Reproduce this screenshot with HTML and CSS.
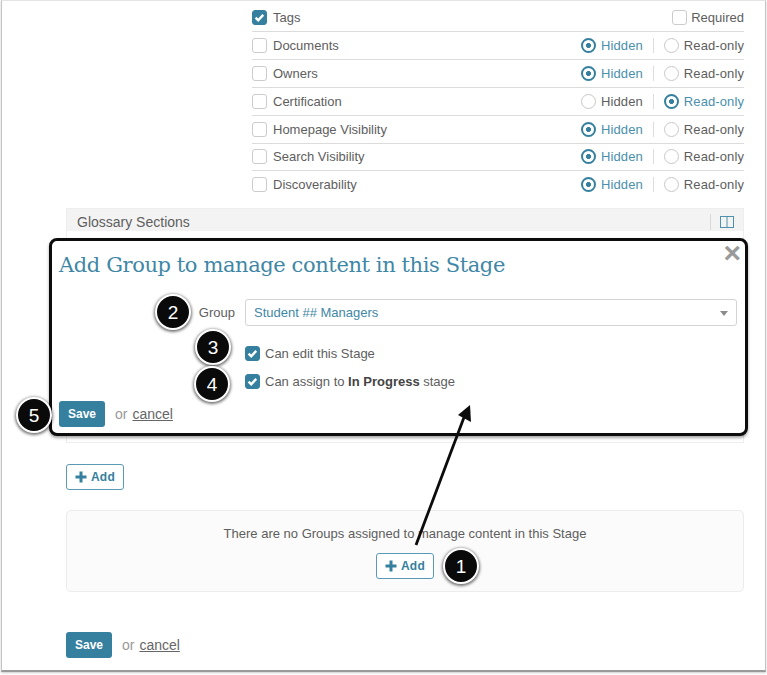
FILE: index.html
```html
<!DOCTYPE html>
<html lang="en">
<head>
<meta charset="utf-8">
<title>Add Group to manage content in this Stage</title>
<link rel="stylesheet" href="styles.css">
</head>
<body>
<div class="window">
  <div class="fields">
    <div class="row">
      <span class="check on"><svg viewBox="0 0 16 16"><path d="M3.2 8.2l3.2 3.2 6.2-6.6" /></svg></span><span class="name">Tags</span>
      <span class="req"><span class="check"></span>Required</span>
    </div>
    <div class="row"><span class="check"></span><span class="name">Documents</span>
      <span class="opts"><span class="opt sel"><i class="radio"></i>Hidden</span><span class="opt"><i class="radio"></i>Read-only</span></span></div>
    <div class="row"><span class="check"></span><span class="name">Owners</span>
      <span class="opts"><span class="opt sel"><i class="radio"></i>Hidden</span><span class="opt"><i class="radio"></i>Read-only</span></span></div>
    <div class="row"><span class="check"></span><span class="name">Certification</span>
      <span class="opts"><span class="opt"><i class="radio"></i>Hidden</span><span class="opt sel"><i class="radio"></i>Read-only</span></span></div>
    <div class="row"><span class="check"></span><span class="name">Homepage Visibility</span>
      <span class="opts"><span class="opt sel"><i class="radio"></i>Hidden</span><span class="opt"><i class="radio"></i>Read-only</span></span></div>
    <div class="row"><span class="check"></span><span class="name">Search Visibility</span>
      <span class="opts"><span class="opt sel"><i class="radio"></i>Hidden</span><span class="opt"><i class="radio"></i>Read-only</span></span></div>
    <div class="row last"><span class="check"></span><span class="name">Discoverability</span>
      <span class="opts"><span class="opt sel"><i class="radio"></i>Hidden</span><span class="opt"><i class="radio"></i>Read-only</span></span></div>
  </div>

  <div class="section-bar">
    <span>Glossary Sections</span>
    <span class="col-toggle"><svg viewBox="0 0 14 14"><rect x="0.5" y="1.5" width="13" height="11" /><path d="M7 1.5v11" /></svg></span>
  </div>
  <div class="section-body"></div>

  <button class="btn-add first"><svg class="plus" viewBox="0 0 12 12"><path d="M6 0.5v11M0.5 6h11" /></svg>Add</button>

  <div class="empty">
    <p>There are no Groups assigned to manage content in this Stage</p>
    <button class="btn-add"><svg class="plus" viewBox="0 0 12 12"><path d="M6 0.5v11M0.5 6h11" /></svg>Add</button>
  </div>

  <div class="actions">
    <button class="btn-save">Save</button><span class="or">or</span><a class="cancel">cancel</a>
  </div>

  <div class="popup">
    <span class="close">×</span>
    <h2>Add Group to manage content in this Stage</h2>
    <div class="form-row">
      <label>Group</label>
      <div class="select">Student ## Managers<i class="caret"></i></div>
    </div>
    <div class="check-row first"><span class="check on"><svg viewBox="0 0 16 16"><path d="M3.2 8.2l3.2 3.2 6.2-6.6" /></svg></span>Can edit this Stage</div>
    <div class="check-row"><span class="check on"><svg viewBox="0 0 16 16"><path d="M3.2 8.2l3.2 3.2 6.2-6.6" /></svg></span><span>Can assign to <b>In Progress</b> stage</span></div>
    <div class="actions in-popup">
      <button class="btn-save">Save</button><span class="or">or</span><a class="cancel">cancel</a>
    </div>
  </div>

  <svg class="arrow" viewBox="0 0 767 675"><path d="M416 545L466 412" /><path class="head" d="M470 405L471 422L458 415Z" /></svg>

  <span class="badge b1">1</span>
  <span class="badge b2">2</span>
  <span class="badge b3">3</span>
  <span class="badge b4">4</span>
  <span class="badge b5">5</span>
</div>
</body>
</html>
```
FILE: styles.css
```css
* { box-sizing: border-box; }
html, body { margin: 0; padding: 0; background: #fff; }
body { width: 767px; height: 675px; overflow: hidden; font-family: "Liberation Sans", Arial, sans-serif; font-size: 13px; color: #5e5e5e; }

.window { position: relative; width: 765px; height: 672px; margin-left: 1px; border: 1px solid #c4c4c4; border-top-color: #e4e4e4; border-bottom: 2px solid #9a9a9a; box-shadow: 0 1px 2px rgba(0,0,0,.2); padding: 3px 21px 0 64px; }

.fields { margin-left: 186px; }
.row { display: flex; align-items: center; height: 28px; border-bottom: 1px solid #dcdcdc; }
.row:nth-child(n+5) { height: 27.6px; }
.row.last { border-bottom: 0; }
.name { margin-left: 6px; }

.check { display: inline-flex; flex: none; width: 15px; height: 15px; border: 1px solid #ccc; border-radius: 3px; background: #fff; }
.check.on { background: #36809f; border-color: #36809f; }
.check svg { width: 13px; height: 13px; fill: none; stroke: #fff; stroke-width: 3; }

.req { margin-left: auto; display: flex; align-items: center; gap: 4px; }
.opts { margin-left: auto; display: flex; align-items: center; letter-spacing: .1px; }
.opt { display: flex; align-items: center; gap: 5px; }
.opt + .opt { margin-left: 10px; padding-left: 10px; border-left: 1px solid #ddd; }
.opt.sel { color: #4a8fac; }
.radio { display: block; width: 15px; height: 15px; border-radius: 50%; border: 1px solid #c8c8c8; background: #fff; }
.opt.sel .radio { border: 2px solid #36809f; background: radial-gradient(circle, #36809f 0 2.2px, #fff 2.8px); }

.section-bar { display: flex; justify-content: space-between; align-items: center; height: 23px; margin-top: 9px; padding: 5px 9px 0 10px; background: #f3f3f3; border: 1px solid #eee; border-bottom: 0; font-size: 14px; }
.col-toggle { display: flex; align-items: center; height: 16px; padding-left: 9px; border-left: 1px solid #d8d8d8; }
.col-toggle svg { display: block; width: 14px; height: 14px; fill: none; stroke: #4f90ad; stroke-width: 1; }
.section-body { height: 212px; border: 1px solid #eee; border-top: 0; }

button { font-family: inherit; cursor: pointer; }
.btn-add { display: inline-flex; align-items: center; justify-content: center; gap: 4px; height: 26px; width: 58px; padding: 0; background: #fff; border: 1px solid #5a9ab5; border-radius: 3px; color: #36809f; font-size: 12px; font-weight: 700; letter-spacing: .3px; }
.plus { display: block; width: 12px; height: 12px; fill: none; stroke: #36809f; stroke-width: 3; }
.btn-add.first { display: flex; margin-top: 21px; }

.empty { display: flex; flex-direction: column; align-items: center; height: 82px; margin-top: 20px; padding-top: 15px; border: 1px solid #ececec; border-radius: 5px; background: #fbfbfb; }
.empty p { margin: 0 0 11px; line-height: 16px; }

.actions { display: flex; align-items: center; margin-top: 40px; }
.btn-save { width: 46px; height: 26px; padding: 0; border: 0; border-radius: 3px; background: #36809f; color: #fff; font-size: 12px; font-weight: 700; }
.or { margin-left: 10px; color: #999; font-size: 14px; }
.cancel { margin-left: 5px; color: #666; font-size: 14px; text-decoration: underline; }

.popup { position: absolute; left: 47px; top: 237px; width: 699px; height: 198px; padding: 0 8px 0 7px; background: #fff; border: 3px solid #0c0c0c; border-radius: 8px; box-shadow: 0 2px 3px rgba(0,0,0,.35); }
.popup h2 { margin: 0; padding-top: 10px; font-family: "DejaVu Serif", serif; font-size: 21px; line-height: 28px; font-weight: 400; letter-spacing: -.4px; color: #3f87a6; }
.close { position: absolute; right: 4px; top: -6px; font-size: 30px; line-height: 36px; font-weight: 700; color: #9a9a9a; }

.form-row { display: flex; align-items: center; margin-top: 20px; }
.form-row label { width: 186px; padding-right: 10px; text-align: right; }
.select { position: relative; flex: 1; height: 27px; padding-left: 8px; line-height: 25px; border: 1px solid #d4d4d4; border-radius: 3px; color: #3f87a6; }
.caret { position: absolute; right: 8px; top: 11px; width: 0; height: 0; border: 4px solid transparent; border-top: 5px solid #8c8c8c; border-bottom: 0; }

.check-row { display: flex; align-items: center; gap: 5px; height: 28px; margin-left: 186px; }
.check-row.first { margin-top: 13px; }
.check-row b { color: #444; }

.actions.in-popup { margin-top: 6px; }

.arrow { position: absolute; left: -2px; top: -1px; width: 767px; height: 675px; pointer-events: none; }
.arrow path { fill: none; stroke: #0c0c0c; stroke-width: 2.8; }
.arrow .head { fill: #0c0c0c; stroke: none; }

.badge { position: absolute; display: flex; align-items: center; justify-content: center; width: 36px; height: 36px; border-radius: 50%; background: #0a0a0a; border: 2px solid #fff; box-shadow: 0 1px 3px 1px rgba(0,0,0,.55); color: #fff; font-size: 19px; line-height: 1; }
.b1 { left: 441px; top: 547px; }
.b2 { left: 153px; top: 293px; }
.b3 { left: 193px; top: 328px; }
.b4 { left: 192px; top: 365px; }
.b5 { left: 14px; top: 396px; }
```
